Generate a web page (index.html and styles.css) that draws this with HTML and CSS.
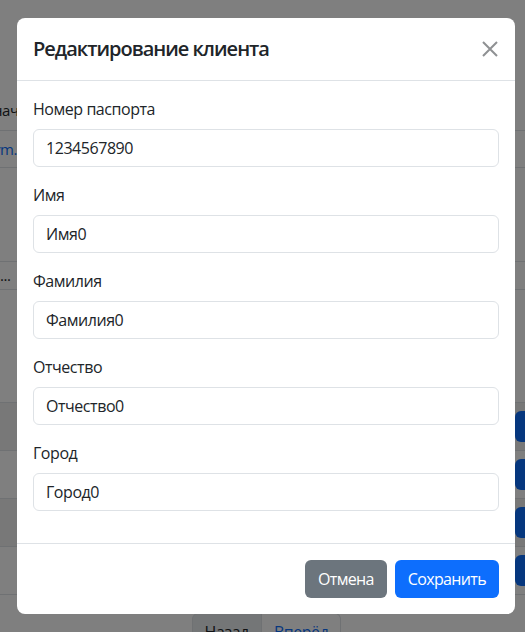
FILE: index.html
```html
<!DOCTYPE html>
<html lang="ru">
<head>
<meta charset="utf-8">
<title>Редактирование клиента</title>
<link rel="stylesheet" href="styles.css">
</head>
<body>
<div class="page">
  <div class="tbl">
    <div class="row row-head"><span class="cut">начала</span></div>
    <div class="row row-link"><span class="cut link">ym.ru</span></div>
    <div class="row row-tall"></div>
    <div class="row row-dots"><span class="cut dots">...</span></div>
    <div class="row row-big"></div>
    <div class="row row-s striped"><span class="act"></span></div>
    <div class="row row-s"><span class="act"></span></div>
    <div class="row row-s striped"><span class="act"></span></div>
    <div class="row row-s"><span class="act"></span></div>
  </div>
  <div class="pager">
    <span class="pg pg-off">Назад</span>
    <span class="pg pg-on">Вперёд</span>
  </div>
</div>
<div class="backdrop"></div>
<div class="modal">
  <div class="modal-header">
    <h5 class="modal-title">Редактирование клиента</h5>
    <button class="btn-close" type="button" aria-label="Закрыть">
      <svg width="16" height="16" viewBox="0 0 16 16"><path d="M1 1L15 15M15 1L1 15" stroke="#212529" stroke-width="2" fill="none"/></svg>
    </button>
  </div>
  <div class="modal-body">
    <div class="field">
      <label class="label">Номер паспорта</label>
      <div class="input">1234567890</div>
    </div>
    <div class="field">
      <label class="label">Имя</label>
      <div class="input">Имя0</div>
    </div>
    <div class="field">
      <label class="label">Фамилия</label>
      <div class="input">Фамилия0</div>
    </div>
    <div class="field">
      <label class="label">Отчество</label>
      <div class="input">Отчество0</div>
    </div>
    <div class="field">
      <label class="label">Город</label>
      <div class="input">Город0</div>
    </div>
  </div>
  <div class="modal-footer">
    <button class="btn btn-secondary" type="button">Отмена</button>
    <button class="btn btn-primary" type="button">Сохранить</button>
  </div>
</div>
</body>
</html>
```
FILE: styles.css
```css
* { box-sizing: border-box; }
html, body { margin: 0; padding: 0; }
body {
  width: 525px;
  height: 632px;
  overflow: hidden;
  background: #fff;
  color: #212529;
  font-family: "Open Sans", "Noto Sans", "Liberation Sans", sans-serif;
  font-size: 16px;
  line-height: 1.5;
  letter-spacing: -0.45px;
  position: relative;
}
.page { padding-top: 90px; }
.tbl { display: flex; flex-direction: column; }
.row {
  border-bottom: 1px solid #dee2e6;
  display: flex;
  align-items: center;
  overflow: hidden;
  position: relative;
}
.row-head { height: 41px; }
.row-link { height: 37px; }
.row-tall { height: 94px; }
.row-dots { height: 28px; }
.row-big { height: 113px; }
.row-s { height: 48px; }
.striped { background: rgba(0,0,0,0.06); }
.cut { margin-left: -7px; white-space: nowrap; font-size: 15px; }
.row-link .cut { margin-left: -7px; }
.dots { margin-left: 0; }
.link { color: #0d6efd; }
.act {
  margin-left: auto;
  margin-right: -20px;
  width: 30px;
  height: 31px;
  background: #0d6efd;
  border-radius: 6px;
}
.pager {
  display: flex;
  justify-content: center;
  margin-top: 18px;
  padding-left: 8px;
}
.pg {
  border: 1px solid #dee2e6;
  padding: 6px 12px;
  line-height: 24px;
}
.pg-off { background: #e9ecef; color: #212529; border-radius: 6px 0 0 6px; }
.pg-on { color: #0d6efd; border-left: 0; border-radius: 0 6px 6px 0; }
.backdrop {
  position: absolute;
  inset: 0;
  background: rgba(0,0,0,0.5);
}
.modal {
  position: absolute;
  left: 17px;
  top: 18px;
  width: 498px;
  background: #fff;
  border-radius: 8px;
  display: flex;
  flex-direction: column;
}
.modal-header {
  display: flex;
  align-items: center;
  justify-content: space-between;
  padding: 16px;
  height: 63px;
  border-bottom: 1px solid #dee2e6;
}
.modal-title {
  margin: 0;
  font-size: 20px;
  font-weight: 600;
  line-height: 30px;
  letter-spacing: -1px;
}
.btn-close {
  border: 0;
  background: none;
  padding: 0;
  margin-right: 1px;
  width: 16px;
  height: 16px;
  opacity: 0.5;
  display: flex;
}
.modal-body { padding: 16px 16px 0 16px; }
.field { display: flex; flex-direction: column; margin-bottom: 16px; }
.label { display: block; margin-bottom: 8px; line-height: 24px; }
.input {
  height: 38px;
  border: 1px solid #dee2e6;
  border-radius: 6px;
  padding: 6px 12px;
  line-height: 24px;
}
.modal-footer {
  border-top: 1px solid #dee2e6;
  margin-top: 16px;
  padding: 12px;
  display: flex;
  justify-content: flex-end;
}
.btn {
  margin: 4px;
  border: 1px solid transparent;
  border-radius: 6px;
  padding: 6px 12px;
  font-family: inherit;
  font-size: 16px;
  line-height: 24px;
  letter-spacing: -0.65px;
  color: #fff;
}
.btn-secondary { background: #6c757d; }
.btn-primary { background: #0d6efd; }
```
